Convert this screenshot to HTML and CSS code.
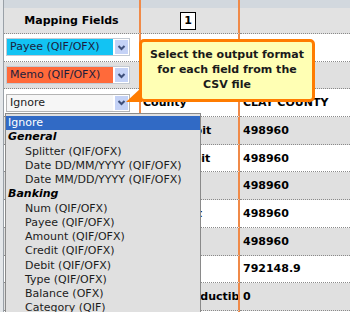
FILE: index.html
```html
<!DOCTYPE html>
<html lang="en">
<head>
  <meta charset="UTF-8" />
  <title>CSV Mapping</title>
  <link rel="stylesheet" href="styles.css">
</head>
<body>
<div class="sheet">
  <div class="row top"><div class="cell"></div><div class="cell"></div><div class="cell"></div></div>

  <div class="row head">
    <div class="cell c1 center">Mapping Fields</div>
    <div class="cell c2 center"><span class="colno">1</span></div>
    <div class="cell c3"></div>
  </div>

  <div class="row">
    <div class="cell c1">
      <div class="picker payee"><span class="picker-value">Payee (QIF/OFX)</span><span class="picker-btn"><svg width="13" height="13" viewBox="0 0 13 13"><polyline points="3.5,5 6.5,8 9.5,5" fill="none" stroke="#3d4f7a" stroke-width="2"/></svg></span></div>
    </div>
    <div class="cell c2"></div>
    <div class="cell c3"></div>
  </div>

  <div class="row alt">
    <div class="cell c1">
      <div class="picker memo"><span class="picker-value">Memo (QIF/OFX)</span><span class="picker-btn"><svg width="13" height="13" viewBox="0 0 13 13"><polyline points="3.5,5 6.5,8 9.5,5" fill="none" stroke="#3d4f7a" stroke-width="2"/></svg></span></div>
    </div>
    <div class="cell c2"></div>
    <div class="cell c3"></div>
  </div>

  <div class="row">
    <div class="cell c1">
      <div class="picker ignore"><span class="picker-value">Ignore</span><span class="picker-btn"><svg width="13" height="13" viewBox="0 0 13 13"><polyline points="3.5,5 6.5,8 9.5,5" fill="none" stroke="#3d4f7a" stroke-width="2"/></svg></span></div>
    </div>
    <div class="cell c2">County</div>
    <div class="cell c3">CLAY COUNTY</div>
  </div>

  <div class="row alt"><div class="cell c1"></div><div class="cell c2">Bank Debit</div><div class="cell c3">498960</div></div>
  <div class="row"><div class="cell c1"></div><div class="cell c2">Total Debit</div><div class="cell c3">498960</div></div>
  <div class="row alt"><div class="cell c1"></div><div class="cell c2">Land Val.</div><div class="cell c3">498960</div></div>
  <div class="row"><div class="cell c1"></div><div class="cell c2">Total Amt</div><div class="cell c3">498960</div></div>
  <div class="row alt"><div class="cell c1"></div><div class="cell c2">Exempt</div><div class="cell c3">498960</div></div>
  <div class="row"><div class="cell c1"></div><div class="cell c2">Sale Amt</div><div class="cell c3">792148.9</div></div>
  <div class="row alt"><div class="cell c1"></div><div class="cell c2">Policy Deductible</div><div class="cell c3">0</div></div>
  <div class="row"><div class="cell c1"></div><div class="cell c2"></div><div class="cell c3"></div></div>
</div>

<!-- tooltip pointing at the open field picker -->
<svg class="callout-tip" width="18" height="17" viewBox="0 0 18 17">
  <polygon points="17,1 17,16 1,16" fill="#ff7c00"/>
</svg>
<div class="callout">
  Select the output format<br>
  for each field from the<br>
  CSV file
</div>

<!-- open dropdown of the third picker -->
<ul class="options">
  <li class="opt selected">Ignore</li>
  <li class="group">General</li>
  <li class="opt sub">Splitter (QIF/OFX)</li>
  <li class="opt sub">Date DD/MM/YYYY (QIF/OFX)</li>
  <li class="opt sub">Date MM/DD/YYYY (QIF/OFX)</li>
  <li class="group">Banking</li>
  <li class="opt sub">Num (QIF/OFX)</li>
  <li class="opt sub">Payee (QIF/OFX)</li>
  <li class="opt sub">Amount (QIF/OFX)</li>
  <li class="opt sub">Credit (QIF/OFX)</li>
  <li class="opt sub">Debit (QIF/OFX)</li>
  <li class="opt sub">Type (QIF/OFX)</li>
  <li class="opt sub">Balance (OFX)</li>
  <li class="opt sub">Category (QIF)</li>
</ul>
</body>
</html>
```

FILE: styles.css
```css
* {
  box-sizing: border-box;
}
body {
  margin: 0;
  width: 350px;
  height: 312px;
  overflow: hidden;
  position: relative;
  background: #e4e7ea;
  font-family: "DejaVu Sans", Verdana, sans-serif;
  font-size: 11px;
  color: #000;
}
.sheet {
  margin-left: 3px;
  border-left: 1px solid #9aa1a8;
  background: #fff;
}
.row {
  display: grid;
  grid-template-columns: 137px 99px 1fr;
  height: 27.7px;
}
.row.alt {
  background: #e0e0e0;
}
.row.top {
  height: 8px;
  background: #d2d8de;
}
.row.head {
  height: 26px;
  background: #e2e2e2;
}
.cell {
  display: flex;
  align-items: center;
  overflow: hidden;
  white-space: nowrap;
  font-weight: bold;
  border-bottom: 1px dotted #8a8a8a;
}
.row.top .cell {
  border-bottom: none;
}
.c1, .c2, .row.top .cell:nth-child(-n+2) {
  border-right: 2px solid #f08a48;
}
.c2 {
  padding-left: 2px;
}
.c3 {
  padding-left: 3px;
}
.center {
  justify-content: center;
}
.colno {
  display: inline-flex;
  align-items: center;
  justify-content: center;
  width: 16px;
  height: 18px;
  margin-right: 5px;
  border: 1px solid #000;
  background: #fff;
}
.picker {
  display: flex;
  align-items: center;
  width: 124px;
  height: 18px;
  margin-left: 2px;
  border: 1px solid #c3cad3;
  background: #fff;
  font-weight: normal;
}
.picker-value {
  flex: 1;
  height: 100%;
  padding-left: 3px;
  line-height: 16px;
  color: #1c1c3c;
}
.payee .picker-value {
  background: #12c3f3;
}
.memo .picker-value {
  background: #ff6a3a;
}
.ignore {
  border-color: #b4b4b4;
}
.ignore .picker-value {
  background: #f6f6f6;
  color: #222;
}
.picker-btn {
  display: flex;
  align-items: center;
  justify-content: center;
  width: 13px;
  height: 14px;
  margin: 0 1px 0 2px;
  background: #c4d2f6;
}
.callout {
  position: absolute;
  left: 139px;
  top: 39px;
  width: 176px;
  height: 63px;
  padding-top: 5px;
  border: 3px solid #ff7c00;
  border-radius: 5px;
  background: #ffffb4;
  font-weight: bold;
  line-height: 15px;
  text-align: center;
  color: #1a1a1a;
}
.callout-tip {
  position: absolute;
  left: 125px;
  top: 86px;
}
.options {
  position: absolute;
  left: 5px;
  top: 113px;
  width: 196px;
  margin: 0;
  padding: 2px 0 0;
  list-style: none;
  border: 1px solid #8a8a8a;
  background: #e0e0e0;
  color: #1c1c1c;
}
.options li {
  height: 14.25px;
  line-height: 14.25px;
  padding-left: 2px;
  white-space: nowrap;
}
.options .selected {
  background: #316ac5;
  color: #fff;
}
.options .group {
  font-weight: bold;
  font-style: italic;
  color: #000;
}
.options .sub {
  padding-left: 19px;
}
```
